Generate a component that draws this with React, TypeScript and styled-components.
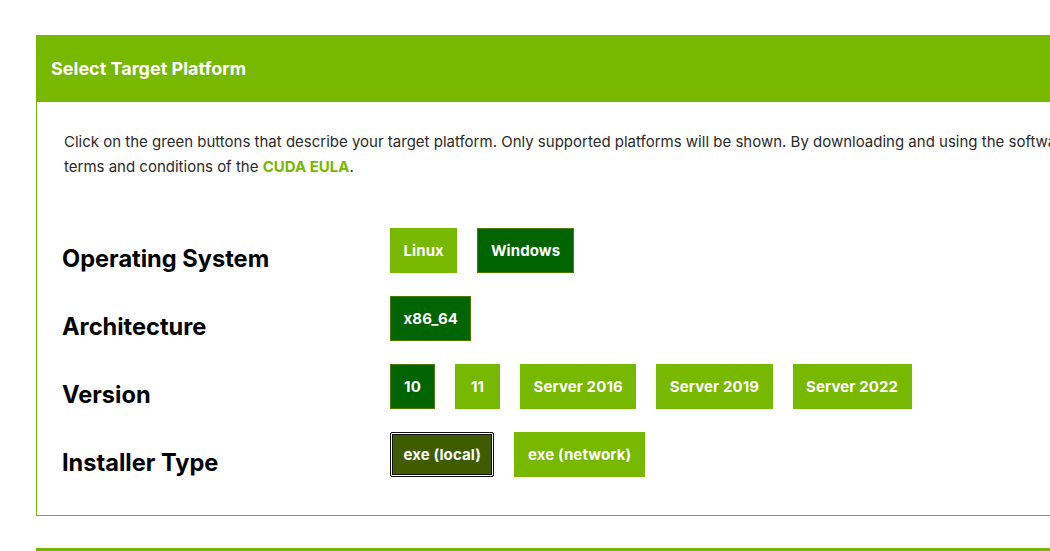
import React from "react";
import styled, { createGlobalStyle } from "styled-components";

const GREEN = "#76b900";
const DARK = "#006400";

const GlobalStyle = createGlobalStyle`
  html, body { margin: 0; padding: 0; background: #fff; overflow: hidden; }
  body { font-family: Inter, "Noto Sans", Arial, sans-serif; }
`;

const Page = styled.div`
  padding: 35px 0 0 36px;
  width: 1200px;
`;

const Panel = styled.section`
  border-left: 1px solid ${GREEN};
  border-bottom: 1px solid ${GREEN};
`;

const Header = styled.h2`
  margin: 0 0 0 -1px;
  height: 67px;
  display: flex;
  align-items: center;
  padding-left: 15px;
  background: ${GREEN};
  color: #fff;
  font-size: 18px;
  font-weight: 700;
`;

const Body = styled.div`
  padding: 27px 0 38px 27px;
`;

const Intro = styled.p`
  margin: 0 0 49px;
  font-size: 15px;
  line-height: 25px;
  color: #2b2b2b;
  white-space: nowrap;
`;

const Eula = styled.a`
  color: ${GREEN};
  font-weight: 700;
  text-decoration: none;
`;

const Rows = styled.div`
  display: flex;
  flex-direction: column;
  gap: 23px;
`;

const Row = styled.div`
  display: grid;
  grid-template-columns: 328px 1fr;
  height: 45px;
  margin-left: -2px;
`;

const Label = styled.div`
  margin-top: 18px;
  font-size: 23.6px;
  line-height: 26px;
  font-weight: 700;
  color: #000;
`;

const Options = styled.div`
  display: flex;
  gap: 20px;
`;

type Kind = "off" | "on" | "focus";

const Btn = styled.button<{ $kind: Kind }>`
  height: 45px;
  min-width: 45px;
  padding: 0 12.5px;
  font-family: inherit;
  font-size: 15px;
  font-weight: 700;
  letter-spacing: 0.1px;
  color: #fff;
  cursor: pointer;
  background: ${(p) => (p.$kind === "off" ? GREEN : p.$kind === "on" ? DARK : "#3f5d00")};
  border: 1px solid ${(p) => (p.$kind === "off" ? GREEN : p.$kind === "on" ? "#4f7a00" : "#111")};
  box-shadow: ${(p) =>
    p.$kind === "focus" ? "inset 0 0 0 1px #fff, inset 0 0 0 2px #111" : "none"};
  border-radius: ${(p) => (p.$kind === "focus" ? "2px" : "0")};
`;

const rows: { label: string; opts: [string, Kind][] }[] = [
  { label: "Operating System", opts: [["Linux", "off"], ["Windows", "on"]] },
  { label: "Architecture", opts: [["x86_64", "on"]] },
  {
    label: "Version",
    opts: [
      ["10", "on"],
      ["11", "off"],
      ["Server 2016", "off"],
      ["Server 2019", "off"],
      ["Server 2022", "off"],
    ],
  },
  { label: "Installer Type", opts: [["exe (local)", "focus"], ["exe (network)", "off"]] },
];

const Divider = styled.div`
  margin-top: 32px;
  height: 4px;
  background: ${GREEN};
`;

export default function App() {
  return (
    <>
      <GlobalStyle />
      <Page>
        <Panel>
          <Header>Select Target Platform</Header>
          <Body>
            <Intro>
              Click on the green buttons that describe your target platform. Only supported platforms will be shown. By downloading and using the software, you agree to fully comply with the
              <br />
              terms and conditions of the <Eula href="#">CUDA EULA</Eula>.
            </Intro>
            <Rows>
              {rows.map((r) => (
                <Row key={r.label}>
                  <Label>{r.label}</Label>
                  <Options>
                    {r.opts.map(([t, k]) => (
                      <Btn key={t} $kind={k}>
                        {t}
                      </Btn>
                    ))}
                  </Options>
                </Row>
              ))}
            </Rows>
          </Body>
        </Panel>
        <Divider />
      </Page>
    </>
  );
}
